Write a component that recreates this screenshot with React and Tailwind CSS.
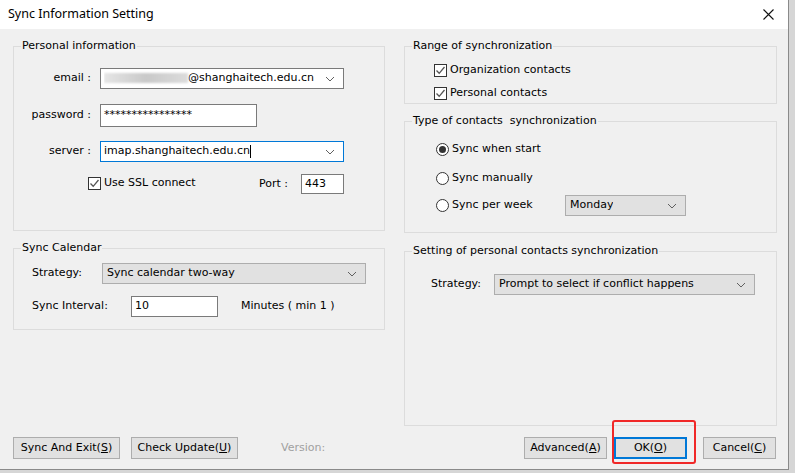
import React from 'react';

const font = { fontFamily: '"DejaVu Sans", Tahoma, sans-serif' };

function Chevron() {
  return (
    <svg width="10" height="6" viewBox="0 0 10 6" className="shrink-0">
      <path d="M1 1 L5 5 L9 1" fill="none" stroke="#606060" strokeWidth="1" />
    </svg>
  );
}

function Group({ title, className = '', children }) {
  return (
    <div className={`relative border border-[#dcdcdc] ${className}`}>
      <span className="absolute -top-[8px] left-[7px] bg-[#f0f0f0] px-[1px] leading-[14px] whitespace-pre">{title}</span>
      {children}
    </div>
  );
}

function Combo({ className = '', focused, children }) {
  return (
    <div className={`flex items-center justify-between bg-white border ${focused ? 'border-[#0078d7]' : 'border-[#7a7a7a]'} pl-[3px] pr-[8px] shrink-0 ${className}`}>
      <span className="truncate">{children}</span>
      <Chevron />
    </div>
  );
}

function Select({ className = '', children }) {
  return (
    <div className={`flex items-center justify-between bg-[#e1e1e1] border border-[#adadad] pl-[4px] pr-[8px] shrink-0 ${className}`}>
      <span className="truncate">{children}</span>
      <Chevron />
    </div>
  );
}

function Input({ className = '', children }) {
  return (
    <div className={`flex items-center bg-white border border-[#7a7a7a] pl-[3px] shrink-0 ${className}`}>{children}</div>
  );
}

function Check({ children }) {
  return (
    <div className="flex items-center h-[13px] whitespace-nowrap">
      <div className="w-[13px] h-[13px] border border-[#333] bg-white flex items-center justify-center shrink-0">
        <svg width="11" height="11" viewBox="0 0 11 11">
          <path d="M1.5 5.5 L4.2 8.3 L9.5 2" fill="none" stroke="#555" strokeWidth="1.3" />
        </svg>
      </div>
      <span className="ml-[3px]">{children}</span>
    </div>
  );
}

function Radio({ checked, children }) {
  return (
    <div className="flex items-center h-[13px] whitespace-nowrap">
      <div className="w-[13px] h-[13px] rounded-full border border-[#333] bg-white flex items-center justify-center shrink-0">
        {checked && <div className="w-[7px] h-[7px] rounded-full bg-[#333]" />}
      </div>
      <span className="ml-[3px]">{children}</span>
    </div>
  );
}

function Btn({ className = '', children }) {
  return (
    <div className={`h-[22px] flex items-center justify-center bg-[#e1e1e1] border border-[#adadad] shrink-0 whitespace-nowrap ${className}`}>{children}</div>
  );
}

export default function App() {
  return (
    <div className="w-[795px] h-[473px] bg-[#d6d6d6] overflow-hidden" style={font}>
      <div className="w-[789px] h-[470px] bg-[#f0f0f0] border-r border-b border-[#8a8a8a] flex flex-col text-[11px] text-black">
        {/* title bar */}
        <div className="h-[29px] bg-white flex items-center justify-between pl-[8px] pr-[14px] shrink-0">
          <span className="text-[12.5px]" style={{ fontFamily: '"Noto Sans", sans-serif' }}>Sync Information Setting</span>
          <svg width="11" height="11" viewBox="0 0 11 11">
            <path d="M0.5 0.5 L10.5 10.5 M10.5 0.5 L0.5 10.5" stroke="#111" strokeWidth="1.1" />
          </svg>
        </div>

        <div className="flex pl-[13px] pt-[17px] gap-[19px]">
          {/* left column */}
          <div className="w-[372px] flex flex-col">
            <Group title="Personal information" className="h-[185px]">
              <div className="flex items-center mt-[21px]">
                <span className="w-[77px] text-right">email :</span>
                <Combo className="ml-[9px] w-[244px] h-[21px]">
                  <span className="inline-block w-[84px] h-[10px] align-middle bg-gradient-to-r from-[#e6e6e6] via-[#c9c9c9] to-[#dcdcdc] blur-[1px]" />
                  @shanghaitech.edu.cn
                </Combo>
              </div>
              <div className="flex items-center mt-[15px]">
                <span className="w-[77px] text-right">password :</span>
                <Input className="ml-[9px] w-[157px] h-[23px]">****************</Input>
              </div>
              <div className="flex items-center mt-[14px]">
                <span className="w-[77px] text-right">server :</span>
                <Combo focused className="ml-[9px] w-[244px] h-[21px]">
                  imap.shanghaitech.edu.cn<span className="inline-block w-[1px] h-[13px] bg-black align-middle" />
                </Combo>
              </div>
              <div className="flex items-center mt-[12px] h-[20px]">
                <div className="ml-[74px] w-[171px] mb-[2px]"><Check>Use SSL connect</Check></div>
                <span className="w-[42px] mt-[1px] whitespace-nowrap">Port :</span>
                <Input className="w-[43px] h-[20px]">443</Input>
              </div>
            </Group>

            <Group title="Sync Calendar" className="mt-[17px] h-[82px]">
              <div className="flex items-center mt-[14px]">
                <span className="ml-[18px] w-[70px]">Strategy:</span>
                <Select className="w-[264px] h-[21px]">Sync calendar two-way</Select>
              </div>
              <div className="flex items-center mt-[12px]">
                <span className="ml-[18px] w-[99px]">Sync Interval:</span>
                <Input className="w-[87px] h-[21px]">10</Input>
                <span className="ml-[23px]">Minutes ( min 1 )</span>
              </div>
            </Group>
          </div>

          {/* right column */}
          <div className="w-[373px] flex flex-col">
            <Group title="Range of synchronization" className="h-[58px]">
              <div className="ml-[29px] mt-[17px] flex flex-col gap-[10px]">
                <Check>Organization contacts</Check>
                <Check>Personal contacts</Check>
              </div>
            </Group>

            <Group title="Type of contacts  synchronization" className="mt-[17px] h-[112px]">
              <div className="ml-[31px] mt-[21px] flex flex-col">
                <Radio checked>Sync when start</Radio>
                <div className="mt-[16px]"><Radio>Sync manually</Radio></div>
                <div className="mt-[10px] flex items-center">
                  <div className="w-[129px]"><Radio>Sync per week</Radio></div>
                  <Select className="w-[121px] h-[21px]">Monday</Select>
                </div>
              </div>
            </Group>

            <Group title="Setting of personal contacts synchronization" className="mt-[18px] h-[175px]">
              <div className="flex items-center mt-[22px]">
                <span className="ml-[26px] w-[63px]">Strategy:</span>
                <Select className="w-[261px] h-[21px]">Prompt to select if conflict happens</Select>
              </div>
            </Group>
          </div>
        </div>

        {/* bottom buttons */}
        <div className="flex items-center justify-between pl-[13px] pr-[12px] mt-[11px]">
          <div className="flex items-center">
            <Btn className="w-[107px]">Sync And Exit(<u>S</u>)</Btn>
            <Btn className="ml-[11px] w-[107px]">Check Update(<u>U</u>)</Btn>
            <span className="ml-[43px] text-[#a0a0a0]">Version:</span>
          </div>
          <div className="flex items-center">
            <Btn className="w-[83px]">Advanced(<u>A</u>)</Btn>
            <div className="relative ml-[7px]">
              <div className="w-[73px] h-[22px] flex items-center justify-center bg-[#e1e1e1] border-2 border-[#0078d7]">OK(<u>O</u>)</div>
              <div className="absolute -left-[2px] -top-[17px] w-[84px] h-[44px] border-2 border-[#f02828] rounded-[3px]" />
            </div>
            <Btn className="ml-[16px] w-[73px]">Cancel(<u>C</u>)</Btn>
          </div>
        </div>
      </div>
    </div>
  );
}
